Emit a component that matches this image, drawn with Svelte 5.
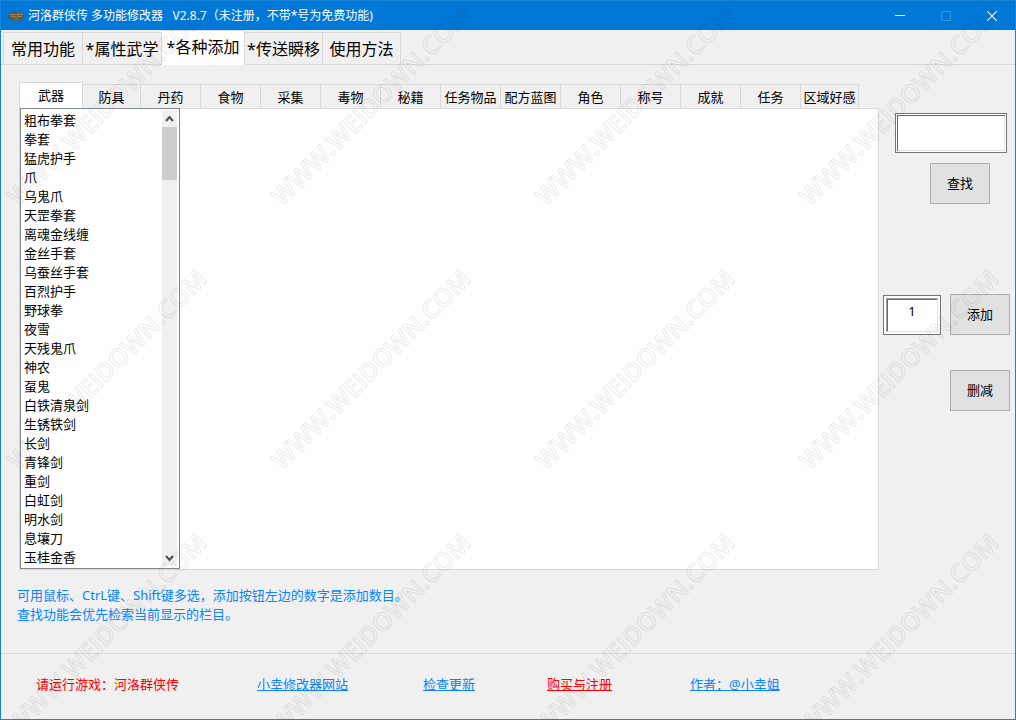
<script lang="ts">
  const mainTabs = ["常用功能", "*属性武学", "*各种添加", "*传送瞬移", "使用方法"];

  const itemTabs = [
    "武器", "防具", "丹药", "食物", "采集", "毒物", "秘籍",
    "任务物品", "配方蓝图", "角色", "称号", "成就", "任务", "区域好感",
  ];

  const weapons = [
    "粗布拳套", "拳套", "猛虎护手", "爪", "乌鬼爪", "天罡拳套",
    "离魂金线缠", "金丝手套", "乌蚕丝手套", "百烈护手", "野球拳", "夜雪",
    "天残鬼爪", "神农", "虿鬼", "白铁清泉剑", "生锈铁剑", "长剑",
    "青锋剑", "重剑", "白虹剑", "明水剑", "息壤刀", "玉桂金香",
  ];

  let activeMain = $state(2);
  let activeItem = $state(0);
  let selected = $state<string[]>([]);
  let query = $state("");
  let amount = $state("1");

  function find() {
    selected = query ? weapons.filter((name) => name.includes(query)) : [];
  }
</script>

<div class="window">
  <header class="titlebar">
    <svg class="app-icon" width="16" height="16" viewBox="0 0 16 16" fill="none">
      <path d="M0 5l3 0 1-1 2 1 1-2 2 1 2-1 1 2 3 0 1 2-1 3-2 1-1 2-2-1-2 1-2-1-2 1-1-2-3-1 1-2z" fill="#5c5237"/>
      <path d="M1 6l3 1 2-1 3 1 3-1 3 1M3 9l3-1 2 2 3-2 3 1" stroke="#b08f5c"/>
      <path d="M5 11l3 1 3-1M9 5h2" stroke="#8a7550"/>
    </svg>
    <h1>河洛群侠传 多功能修改器&nbsp;&nbsp; V2.8.7（未注册，不带*号为免费功能)</h1>
    <div class="controls">
      <button aria-label="最小化">
        <svg width="10" height="10" viewBox="0 0 10 10" stroke="currentColor"><path d="M0 4.500h10"/></svg>
      </button>
      <button aria-label="最大化" disabled>
        <svg width="10" height="10" viewBox="0 0 10 10" fill="none" stroke="currentColor"><path d="M.5.5h9v9h-9z"/></svg>
      </button>
      <button aria-label="关闭">
        <svg width="10" height="10" viewBox="0 0 10 10" stroke="currentColor" stroke-width="1.2"><path d="M0 0l10 10M10 0L0 10"/></svg>
      </button>
    </div>
  </header>

  <div class="tabs main-tabs" role="tablist">
    {#each mainTabs as tab, i}
      <button role="tab" aria-selected={i === activeMain} class:active={i === activeMain} onclick={() => (activeMain = i)}>
        {tab}
      </button>
    {/each}
  </div>

  <main>
    <div class="workspace">
      <section class="items">
        <div class="tabs item-tabs" role="tablist">
          {#each itemTabs as tab, i}
            <button role="tab" aria-selected={i === activeItem} class:active={i === activeItem} onclick={() => (activeItem = i)}>
              {tab}
            </button>
          {/each}
        </div>
        <div class="pane">
          <div class="listbox">
            <select multiple size={weapons.length} aria-label="武器" bind:value={selected}>
              {#each weapons as name}
                <option value={name}>{name}</option>
              {/each}
            </select>
            <div class="scrollbar">
              <svg width="15" height="17" viewBox="0 0 15 17" fill="none" stroke="#505050" stroke-width="2"><path d="M4 11l3.500-4 3.500 4"/></svg>
              <div class="thumb"></div>
              <svg width="15" height="17" viewBox="0 0 15 17" fill="none" stroke="#505050" stroke-width="2"><path d="M4 7l3.500 4 3.500-4"/></svg>
            </div>
          </div>
        </div>
      </section>

      <aside>
        <div class="search">
          <input type="text" aria-label="查找内容" bind:value={query} />
          <button class="action" onclick={find}>查找</button>
        </div>
        <div class="change">
          <input class="amount" type="text" aria-label="添加数目" bind:value={amount} />
          <button class="action">添加</button>
        </div>
        <button class="action remove">删减</button>
      </aside>
    </div>

    <p class="hint">
      可用鼠标、CtrL键、Shift键多选，添加按钮左边的数字是添加数目。<br />
      查找功能会优先检索当前显示的栏目。
    </p>
  </main>

  <footer>
    <span class="alert">请运行游戏：河洛群侠传</span>
    <a href="#site">小幸修改器网站</a>
    <a href="#update">检查更新</a>
    <a href="#buy" class="alert">购买与注册</a>
    <a href="#author">作者：@小幸姐</a>
  </footer>

  <svg class="watermark" width="100%" height="100%" aria-hidden="true">
    <defs>
      <pattern id="mark" width="264" height="264" patternUnits="userSpaceOnUse">
        <text x="17" y="207" transform="rotate(-45 17 207)">WWW.WEIDOWN.COM</text>
      </pattern>
    </defs>
    <rect width="100%" height="100%" fill="url(#mark)" />
  </svg>
</div>

<style>
  :global(body) {
    margin: 0;
  }

  .window {
    position: relative;
    display: flex;
    flex-direction: column;
    box-sizing: border-box;
    min-height: 100vh;
    border: 1px solid #1883d7;
    border-top: none;
    background: #f0f0f0;
    color: #000;
    font-family: "Noto Sans", "Noto Sans CJK SC", sans-serif;
    font-size: 13px;
    line-height: 19px;
  }

  button,
  input,
  select {
    box-sizing: border-box;
    margin: 0;
    padding: 0;
    border-radius: 0;
    color: inherit;
    font: inherit;
  }

  .titlebar {
    display: flex;
    align-items: center;
    box-sizing: border-box;
    height: 30px;
    padding-left: 7px;
    border-top: 1px solid #1883d7;
    background: #0078d7;
    color: #fff;
  }

  .titlebar h1 {
    flex: 1;
    margin: 0 0 0 4px;
    font-size: 12px;
    font-weight: 400;
    white-space: nowrap;
  }

  .controls {
    display: flex;
    height: 100%;
  }

  .controls button {
    display: flex;
    align-items: center;
    justify-content: center;
    width: 46px;
    border: none;
    background: none;
  }

  .controls button:disabled {
    color: #3c97e0;
  }

  .tabs {
    display: flex;
    align-items: flex-end;
  }

  .tabs button {
    padding-top: 2px;
    border: 1px solid #d9d9d9;
    border-left-width: 0;
    border-bottom: none;
    background: #f0f0f0;
    white-space: nowrap;
  }

  .tabs button:first-child {
    border-left-width: 1px;
  }

  .tabs .active {
    padding-top: 0;
    background: #fff;
  }

  .main-tabs {
    height: 35px;
    padding-left: 2px;
    font-size: 16px;
    box-shadow: inset 0 -1px #d9d9d9;
  }

  .main-tabs button {
    width: 79px;
    height: 32px;
    margin-bottom: 1px;
  }

  .main-tabs button:first-child {
    width: 80px;
  }

  .main-tabs .active {
    width: 83px;
    height: 35px;
    margin-bottom: 0;
    padding-bottom: 2px;
  }

  .main-tabs .active ~ button {
    width: 78px;
  }

  main {
    flex: 1;
    padding: 17px 0 20px 1px;
  }

  .workspace {
    display: flex;
  }

  .items {
    flex: 1;
    min-width: 0;
    margin-left: 17px;
  }

  .item-tabs {
    height: 26px;
  }

  .item-tabs button {
    width: 60px;
    height: 24px;
  }

  .item-tabs .active {
    width: 64px;
    height: 26px;
  }

  .item-tabs button:nth-child(2),
  .item-tabs button:last-child {
    width: 58px;
  }

  .pane {
    border: 1px solid #d9d9d9;
    background: #fff;
  }

  .listbox {
    display: flex;
    box-sizing: border-box;
    width: 160px;
    margin-top: -1px;
    padding: 1px 2px 2px 0;
    border: 1px solid #828790;
    background: #fff;
  }

  .listbox select {
    flex: 1;
    height: 456px;
    padding: 0 3px;
    border: none;
    outline: none;
    background: #fff;
    overflow: hidden;
  }

  .listbox option {
    height: 19px;
    min-height: 19px;
    padding: 0;
    line-height: 19px;
  }

  .scrollbar {
    display: flex;
    flex-direction: column;
    width: 15px;
    background: #f0f0f0;
  }

  .thumb {
    height: 53px;
    margin-bottom: auto;
    background: #cdcdcd;
  }

  aside {
    display: flex;
    flex-direction: column;
    align-items: flex-end;
    width: 131px;
    padding: 31px 5px 0 0;
  }

  .search {
    display: flex;
    flex-direction: column;
    align-items: center;
    gap: 10px;
    margin-right: 3px;
  }

  .search .action {
    margin-left: 18px;
  }

  input {
    width: 112px;
    height: 40px;
    padding: 0 6px;
    border: 1px solid #767676;
    outline: none;
    background: #fff;
    box-shadow:
      inset 0 0 0 1px #fff,
      inset 2px 2px #696969,
      inset -2px -2px #e3e3e3;
  }

  .amount {
    width: 58px;
    padding-bottom: 8px;
    text-align: center;
    box-shadow:
      inset 0 0 0 2px #fff,
      inset 3px 3px #a0a0a0,
      inset -3px -3px #e3e3e3,
      inset 4px 4px #696969;
  }

  .action {
    width: 60px;
    height: 41px;
    border: 1px solid #adadad;
    background: #e1e1e1;
  }

  .change {
    display: flex;
    align-items: flex-end;
    gap: 9px;
    margin-top: 90px;
  }

  .remove {
    margin-top: 35px;
  }

  .hint {
    margin: 16px 0 0 15px;
    color: #0a84ff;
  }

  footer {
    display: grid;
    grid-template-columns: 221px 166px 124px 143px auto;
    align-items: center;
    box-sizing: border-box;
    height: 66px;
    padding: 0 0 4px 35px;
    border-top: 1px solid #d9d9d9;
    white-space: nowrap;
  }

  footer a {
    color: #0a84ff;
    justify-self: start;
  }

  footer .alert {
    color: #f00;
  }

  .watermark {
    position: absolute;
    inset: 0;
    pointer-events: none;
  }

  .watermark text {
    fill: none;
    stroke: #000;
    stroke-linejoin: round;
    stroke-opacity: 0.08;
    stroke-width: 1;
    font-family: "Open Sans", sans-serif;
    font-size: 25px;
    font-weight: 600;
  }
</style>
